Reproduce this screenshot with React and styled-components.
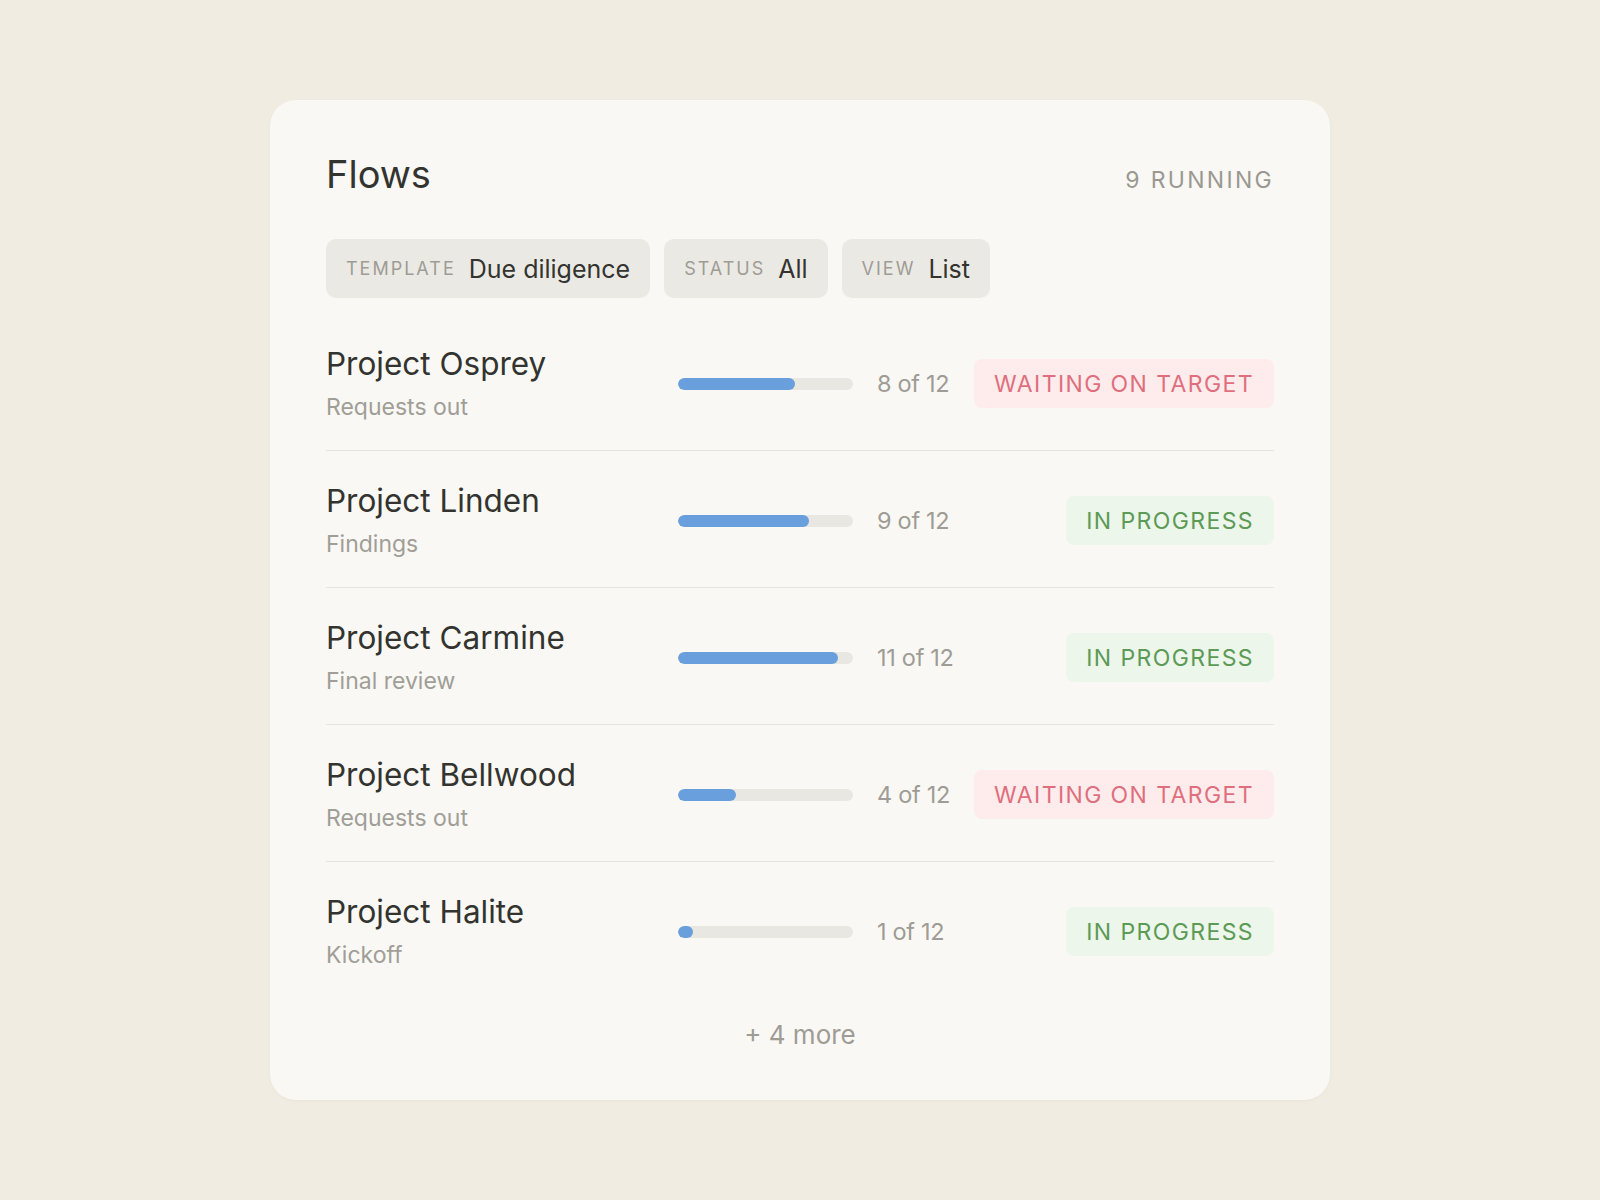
import React from 'react';
import styled, { createGlobalStyle } from 'styled-components';

const GlobalStyle = createGlobalStyle`
  html, body {
    margin: 0;
    padding: 0;
  }
  body {
    background: #f1ece1;
    font-family: Inter, 'Liberation Sans', sans-serif;
    -webkit-font-smoothing: antialiased;
  }
`;

const Page = styled.div`
  min-height: 100vh;
  display: flex;
  align-items: center;
  justify-content: center;
`;

const Card = styled.div`
  width: 1060px;
  height: 1000px;
  box-sizing: border-box;
  background: #f9f8f4;
  border-radius: 26px;
  padding: 51px 56px 48px;
  box-shadow: 0 1px 3px rgba(120, 110, 90, 0.06);
  display: flex;
  flex-direction: column;
`;

const Header = styled.div`
  display: flex;
  justify-content: space-between;
  align-items: baseline;
`;

const Title = styled.h1`
  margin: 0;
  font-size: 38px;
  line-height: 46px;
  font-weight: 400;
  color: #33332f;
`;

const Running = styled.div`
  font-size: 23px;
  letter-spacing: 2.3px;
  color: #9a9891;
`;

const Filters = styled.div`
  display: flex;
  gap: 14px;
  margin-top: 42px;
  margin-bottom: 16px;
`;

const Pill = styled.div`
  height: 59px;
  box-sizing: border-box;
  padding: 0 20px;
  display: flex;
  align-items: center;
  gap: 13px;
  background: #ebe9e4;
  border-radius: 10px;
`;

const PillLabel = styled.span`
  font-size: 18px;
  letter-spacing: 2px;
  color: #9e9c95;
`;

const PillValue = styled.span`
  font-size: 25px;
  color: #33332f;
`;

const Row = styled.div`
  display: grid;
  grid-template-columns: 328px 175px minmax(0, 1fr) auto;
  column-gap: 24px;
  align-items: center;
  padding: 31px 0 28px;
  border-bottom: ${p => (p.$last ? 'none' : '1px solid #e6e3dc')};
`;

const Name = styled.div`
  display: flex;
  flex-direction: column;
  gap: 9px;
`;

const ProjectName = styled.div`
  font-size: 31.5px;
  line-height: 38px;
  color: #33332f;
`;

const Stage = styled.div`
  font-size: 23px;
  line-height: 30px;
  color: #a09e97;
`;

const Track = styled.div`
  height: 12px;
  border-radius: 6px;
  background: #e9e7e2;
  overflow: hidden;
`;

const Fill = styled.div`
  height: 100%;
  border-radius: 6px;
  background: #6a9fdd;
`;

const Count = styled.div`
  font-size: 23.5px;
  letter-spacing: -0.3px;
  color: #9e9c95;
  white-space: nowrap;
`;

const Badge = styled.div`
  justify-self: end;
  height: 49px;
  box-sizing: border-box;
  padding: 0 20px;
  display: flex;
  align-items: center;
  border-radius: 8px;
  font-size: 23px;
  letter-spacing: 1.4px;
  white-space: nowrap;
  color: ${p => (p.$tone === 'wait' ? '#df6f7e' : '#5c9a56')};
  background: ${p => (p.$tone === 'wait' ? '#fdeceb' : '#edf6ea')};
`;

const More = styled.div`
  margin-top: 21px;
  text-align: center;
  font-size: 26px;
  color: #9e9c95;
`;

const filters = [
  { label: 'TEMPLATE', value: 'Due diligence' },
  { label: 'STATUS', value: 'All' },
  { label: 'VIEW', value: 'List' },
];

const flows = [
  { name: 'Project Osprey', stage: 'Requests out', done: 8, tone: 'wait' },
  { name: 'Project Linden', stage: 'Findings', done: 9, tone: 'progress' },
  { name: 'Project Carmine', stage: 'Final review', done: 11, tone: 'progress' },
  { name: 'Project Bellwood', stage: 'Requests out', done: 4, tone: 'wait' },
  { name: 'Project Halite', stage: 'Kickoff', done: 1, tone: 'progress' },
];

const TOTAL = 12;

function App() {
  return (
    <Page>
      <GlobalStyle />
      <Card>
        <Header>
          <Title>Flows</Title>
          <Running>9 RUNNING</Running>
        </Header>
        <Filters>
          {filters.map(f => (
            <Pill key={f.label}>
              <PillLabel>{f.label}</PillLabel>
              <PillValue>{f.value}</PillValue>
            </Pill>
          ))}
        </Filters>
        {flows.map((f, i) => (
          <Row key={f.name} $last={i === flows.length - 1}>
            <Name>
              <ProjectName>{f.name}</ProjectName>
              <Stage>{f.stage}</Stage>
            </Name>
            <Track>
              <Fill style={{ width: `${Math.max((f.done / TOTAL) * 100, 8)}%` }} />
            </Track>
            <Count>{f.done} of {TOTAL}</Count>
            <Badge $tone={f.tone}>
              {f.tone === 'wait' ? 'WAITING ON TARGET' : 'IN PROGRESS'}
            </Badge>
          </Row>
        ))}
        <More>+ 4 more</More>
      </Card>
    </Page>
  );
}

export default App;
